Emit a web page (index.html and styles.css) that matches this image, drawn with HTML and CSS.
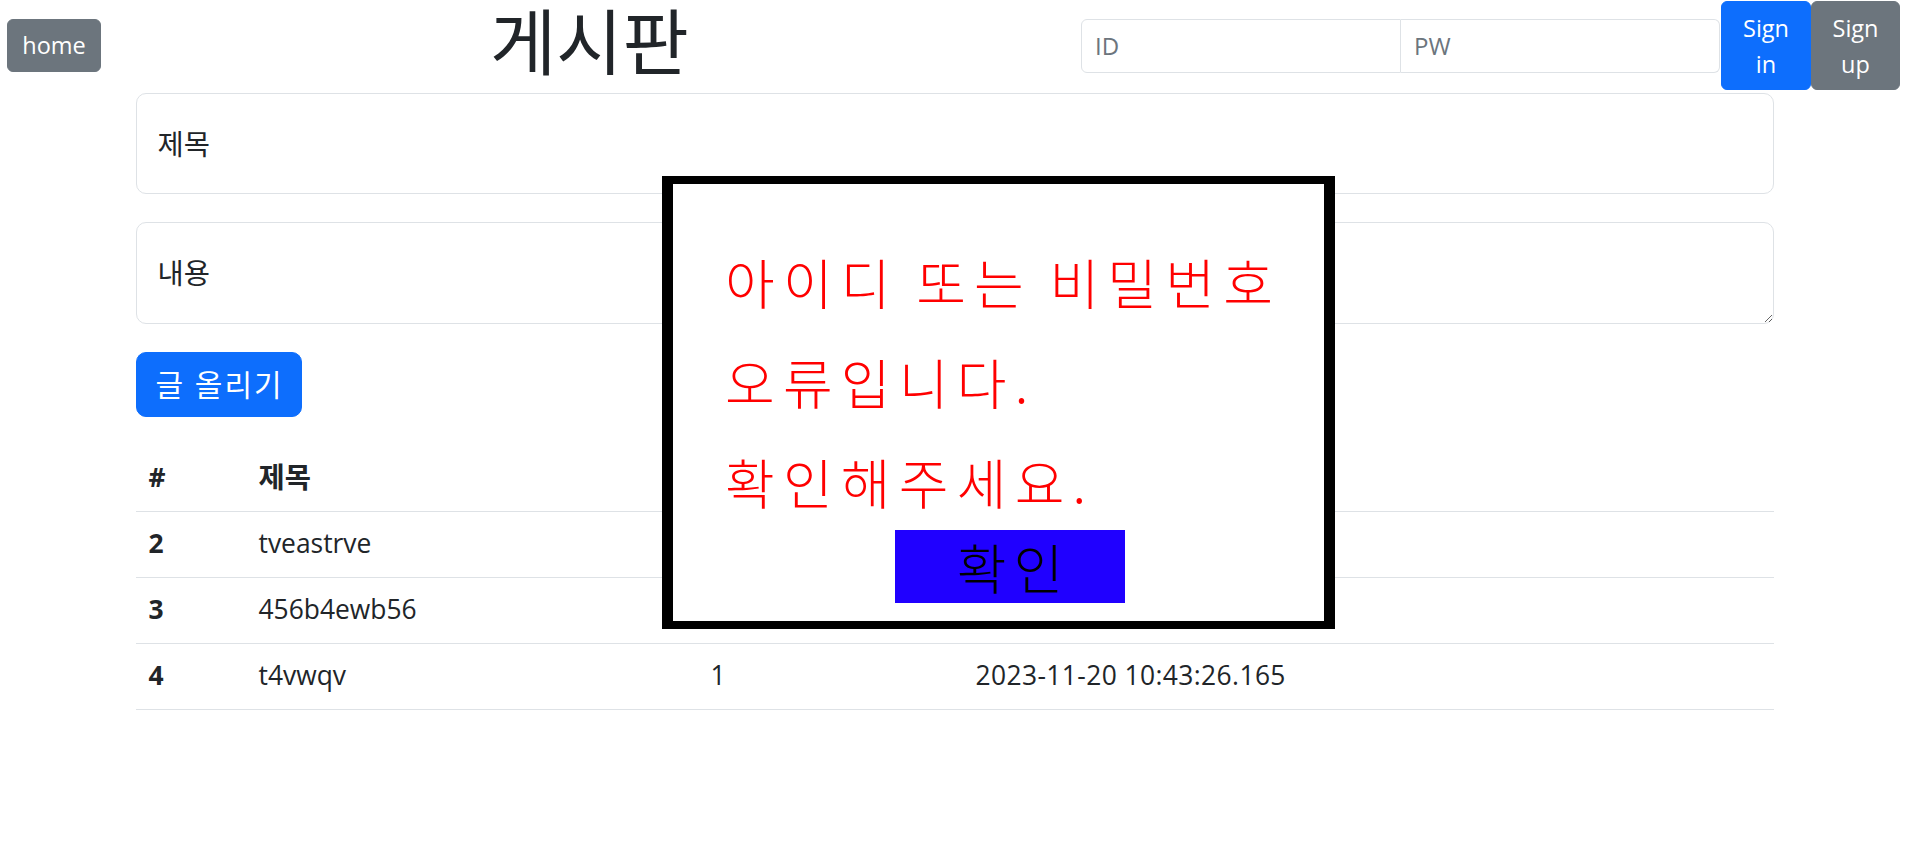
FILE: index.html
```html
<!DOCTYPE html>
<html lang="ko">
<head>
<meta charset="utf-8">
<title>게시판</title>
<link rel="stylesheet" href="styles.css">
</head>
<body>
<header class="topbar">
  <button class="btn btn-home">home</button>
  <h1 class="title">게시판</h1>
  <form class="login">
    <input class="login-input login-id" type="text" placeholder="ID">
    <input class="login-input login-pw" type="password" placeholder="PW">
    <button type="button" class="btn btn-sign btn-primary">Sign<br>in</button>
    <button type="button" class="btn btn-sign btn-secondary">Sign<br>up</button>
  </form>
</header>

<main class="container">
  <input class="field field-title" type="text" placeholder="제목">
  <textarea class="field field-body" placeholder="내용"></textarea>
  <button class="btn btn-post">글 올리기</button>

  <table class="board">
    <thead>
      <tr>
        <th class="c-num">#</th>
        <th class="c-title">제목</th>
        <th class="c-author">작성자</th>
        <th class="c-date">작성일</th>
      </tr>
    </thead>
    <tbody>
      <tr>
        <th>2</th>
        <td>tveastrve</td>
        <td>1</td>
        <td class="date">2023-11-20 10:40:12.381</td>
      </tr>
      <tr>
        <th>3</th>
        <td>456b4ewb56</td>
        <td>1</td>
        <td class="date">2023-11-20 10:41:55.902</td>
      </tr>
      <tr>
        <th>4</th>
        <td>t4vwqv</td>
        <td>1</td>
        <td class="date">2023-11-20 10:43:26.165</td>
      </tr>
    </tbody>
  </table>
</main>

<div class="modal">
  <div class="modal-msg">
    <div>아이디 또는 비밀번호</div>
    <div>오류입니다.</div>
    <div>확인해주세요.</div>
  </div>
  <button class="modal-ok">확인</button>
</div>
</body>
</html>
```

FILE: styles.css
```css
* { box-sizing: border-box; }

html, body {
  margin: 0;
  padding: 0;
  background: #fff;
}

body {
  font-family: "Open Sans", "Noto Sans CJK KR", sans-serif;
  font-size: 26.4px;
  line-height: 1.5;
  color: #212529;
}

.btn {
  font-family: inherit;
  border: 1px solid transparent;
  color: #fff;
  cursor: pointer;
  padding: 0;
}

.btn-primary { background: #0d6efd; border-color: #0d6efd; }
.btn-secondary { background: #6c757d; border-color: #6c757d; }

/* header */
.topbar {
  display: flex;
  align-items: center;
  height: 91px;
  padding: 0 9px 0 7px;
}

.btn-home {
  flex-shrink: 0;
  width: 94px;
  height: 53px;
  font-size: 23.5px;
  line-height: 51px;
  text-align: center;
  background: #6c757d;
  border-color: #6c757d;
  border-radius: 6px;
}

.title {
  flex-shrink: 0;
  margin: 0 0 8px 389px;
  font-size: 72px;
  font-weight: 400;
  line-height: 1.1;
}

.login {
  margin: 0 0 0 auto;
  display: flex;
  align-items: center;
}

.login-input {
  height: 54px;
  border: 1px solid #dee2e6;
  padding: 0 13px;
  font-family: inherit;
  font-size: 24px;
  color: #212529;
  background: #fff;
  outline: none;
}
.login-input::placeholder { color: #6c757d; }

.login-id { width: 320px; border-radius: 6px 0 0 6px; }
.login-pw { width: 319px; border-left: 0; border-radius: 0 6px 6px 0; margin-right: 1px; }

.btn-sign {
  height: 89px;
  font-size: 23.5px;
  line-height: 36px;
  text-align: center;
  border-radius: 6px;
}
.btn-sign.btn-primary { width: 90px; }
.btn-sign.btn-secondary { width: 89px; }

/* main */
.container {
  width: 1638px;
  margin: 0 auto;
  padding-top: 2px;
}

.field {
  display: block;
  width: 100%;
  border: 1px solid #dee2e6;
  border-radius: 10px;
  font-family: inherit;
  font-size: 28.5px;
  line-height: 1.5;
  color: #212529;
  background: #fff;
  outline: none;
}
.field::placeholder { color: #212529; }

.field-title {
  height: 101px;
  padding: 0 21px;
}

.field-body {
  height: 102px;
  margin-top: 28px;
  padding: 29px 21px 0;
  resize: vertical;
}

.btn-post {
  display: block;
  margin-top: 28px;
  width: 166px;
  height: 65px;
  padding-left: 2px;
  font-size: 30px;
  letter-spacing: 2px;
  line-height: 1.5;
  background: #0d6efd;
  border-color: #0d6efd;
  border-radius: 10px;
}

.board {
  width: 100%;
  margin-top: 28px;
  border-collapse: collapse;
}

.board th,
.board td {
  height: 66px;
  padding: 0 13px;
  text-align: left;
  vertical-align: middle;
  border-bottom: 1px solid #dee2e6;
  font-weight: 400;
}

.board th { font-weight: 700; }
.board thead th:not(.c-num) { font-size: 28.5px; }
.board .date { letter-spacing: 0.4px; }

.c-num { width: 110px; }
.c-title { width: 452px; }
.c-author { width: 265px; }

/* modal */
.modal {
  position: absolute;
  left: 662px;
  top: 176px;
  width: 673px;
  height: 453px;
  background: #fff;
  border-style: solid;
  border-color: #000;
  border-width: 8px 11px;
  padding: 48px 0 0 52px;
  z-index: 10;
}

.modal-msg {
  color: #ff0000;
  font-family: "Noto Sans CJK KR", sans-serif;
  font-size: 54px;
  font-weight: 300;
  letter-spacing: 8.25px;
  word-spacing: -6px;
  line-height: 100px;
  white-space: nowrap;
}

.modal-ok {
  display: block;
  margin: -2px 0 0 170px;
  width: 230px;
  height: 73px;
  padding: 0 0 0 7px;
  border: 0;
  background: #2000ff;
  color: #000;
  font-family: "Noto Sans CJK KR", sans-serif;
  font-size: 54px;
  font-weight: 300;
  letter-spacing: 7px;
  line-height: 73px;
  text-align: center;
}
```
